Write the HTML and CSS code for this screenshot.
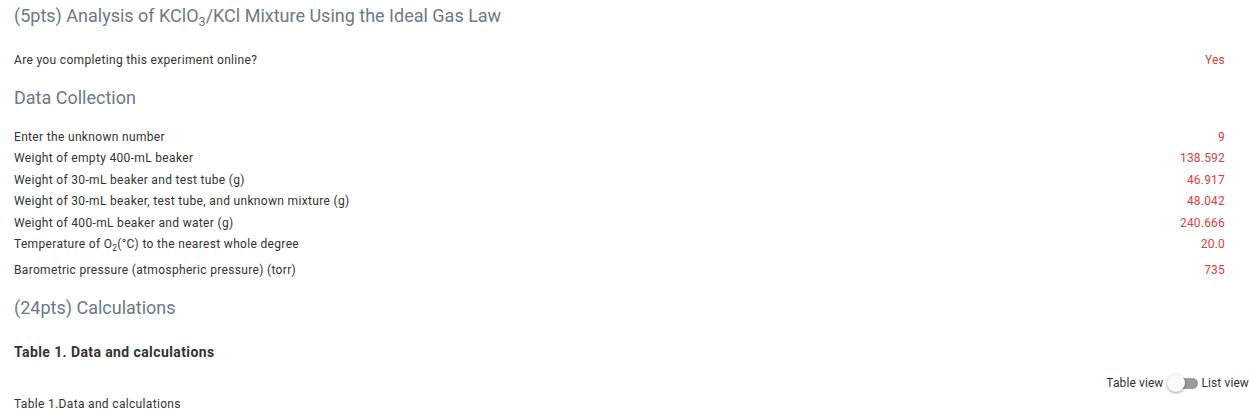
FILE: index.html
```html
<!DOCTYPE html>
<html>
<head>
	<meta charset="utf-8">
	<title>Analysis of KClO3/KCl Mixture</title>
	<link rel="stylesheet" href="styles.css">
</head>
<body>
	<div class="page">
		<h1 class="title">(5pts) Analysis of KClO<sub>3</sub>/KCl Mixture Using the Ideal Gas Law</h1>

		<div class="row question">
			<span class="label">Are you completing this experiment online?</span>
			<span class="value">Yes</span>
		</div>

		<h2 class="section">Data Collection</h2>

		<div class="data">
			<div class="row"><span class="label">Enter the unknown number</span><span class="value">9</span></div>
			<div class="row"><span class="label">Weight of empty 400-mL beaker</span><span class="value">138.592</span></div>
			<div class="row"><span class="label">Weight of 30-mL beaker and test tube (g)</span><span class="value">46.917</span></div>
			<div class="row"><span class="label">Weight of 30-mL beaker, test tube, and unknown mixture (g)</span><span class="value">48.042</span></div>
			<div class="row"><span class="label">Weight of 400-mL beaker and water (g)</span><span class="value">240.666</span></div>
			<div class="row row-sub"><span class="label">Temperature of O<sub>2</sub>(°C) to the nearest whole degree</span><span class="value">20.0</span></div>
			<div class="row"><span class="label">Barometric pressure (atmospheric pressure) (torr)</span><span class="value">735</span></div>
		</div>

		<h2 class="section calc">(24pts) Calculations</h2>

		<h3 class="table-title">Table 1. Data and calculations</h3>

		<div class="view-switch">
			<span>Table view</span>
			<span class="toggle"><span class="knob"></span></span>
			<span>List view</span>
		</div>

		<div class="caption">Table 1.Data and calculations</div>
	</div>
</body>
</html>
```

FILE: styles.css
```css
body {
	margin: 0;
	background-color: #fff;
	color: #333;
	font-family: Roboto, "Liberation Sans", sans-serif;
	font-size: 12px;
	letter-spacing: 0.33px;
}

.page {
	padding: 4px 24px 0 14px;
}

.title,
.section {
	color: #6c7a86;
	font-size: 18px;
	font-weight: 400;
	letter-spacing: 0;
	line-height: 24px;
	margin: 0;
}

.title sub,
.row sub {
	font-size: 70%;
	line-height: 0;
	vertical-align: -0.35em;
}

.row {
	display: flex;
	justify-content: space-between;
	line-height: 21.5px;
	height: 21.5px;
}

.question {
	margin-top: 22px;
}

.section {
	margin-top: 14px;
}

.data {
	margin-top: 17px;
}

.row-sub {
	height: 25.5px;
}

.value {
	color: #d9413e;
	letter-spacing: 0.2px;
}

.calc {
	margin-top: 15px;
}

.table-title {
	color: #333;
	font-size: 14px;
	font-weight: 700;
	letter-spacing: 0.4px;
	line-height: 20px;
	margin: 22px 0 0;
}

.view-switch {
	display: flex;
	align-items: center;
	justify-content: flex-end;
	gap: 2px;
	height: 20px;
	margin: 11px -24px 0 0;
	letter-spacing: 0.1px;
	white-space: nowrap;
}

.toggle {
	position: relative;
	display: inline-block;
	width: 28px;
	height: 11px;
	background-color: #9a9a9a;
	border-radius: 6px;
	margin: 0 2px 0 4px;
}

.knob {
	position: absolute;
	left: -3px;
	top: -4px;
	width: 18px;
	height: 18px;
	background-color: #fafafa;
	border-radius: 50%;
	box-shadow: 0 1px 3px rgba(0, 0, 0, 0.4);
}

.caption {
	line-height: 18px;
	margin-top: 2px;
}
```
